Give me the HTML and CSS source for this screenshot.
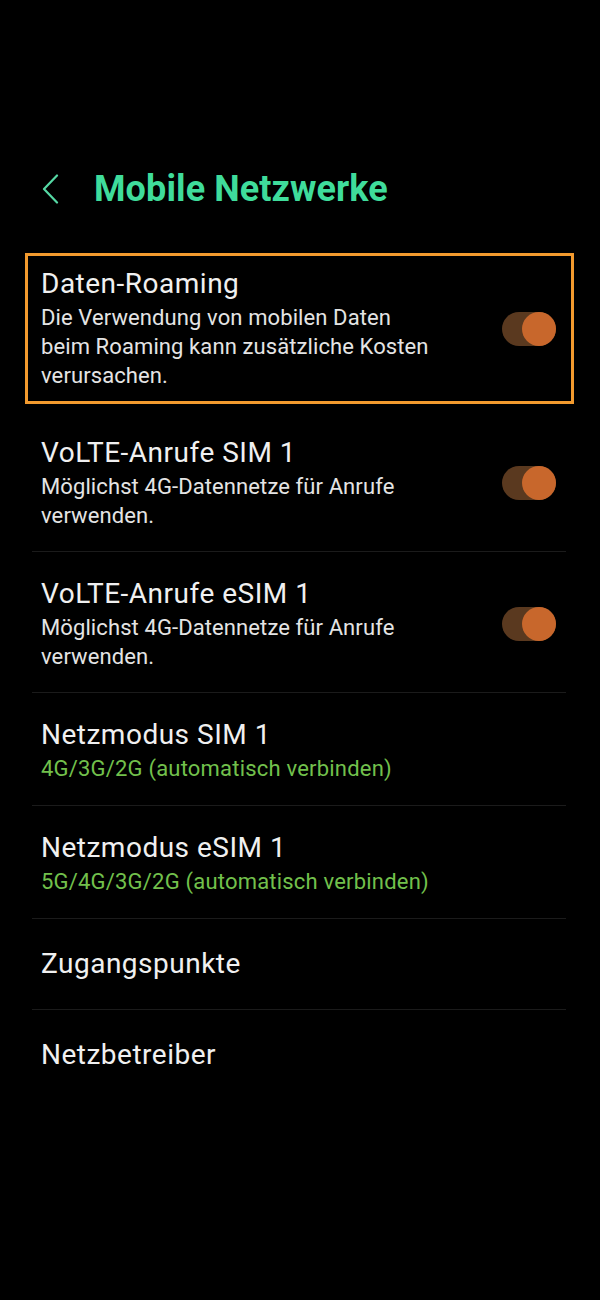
FILE: index.html
```html
<!DOCTYPE html>
<html lang="de">
<head>
<meta charset="utf-8">
<title>Mobile Netzwerke</title>
<link rel="stylesheet" href="styles.css">
</head>
<body>
<div class="page">
  <header class="header">
    <svg class="back" width="18" height="30" viewBox="0 0 18 30"><path d="M16 1.5 L3 15 L16 28.5" fill="none" stroke="#55d8a4" stroke-width="2.2" stroke-linecap="round" stroke-linejoin="round"/></svg>
    <h1 class="title">Mobile Netzwerke</h1>
  </header>
  <ul class="list">
    <li class="row highlighted">
      <div class="text">
        <div class="row-title">Daten-Roaming</div>
        <div class="row-sub">Die Verwendung von mobilen Daten<br>beim Roaming kann zusätzliche Kosten<br>verursachen.</div>
      </div>
      <span class="toggle"><span class="thumb"></span></span>
    </li>
    <li class="row">
      <div class="text">
        <div class="row-title">VoLTE-Anrufe SIM 1</div>
        <div class="row-sub">Möglichst 4G-Datennetze für Anrufe<br>verwenden.</div>
      </div>
      <span class="toggle"><span class="thumb"></span></span>
    </li>
    <li class="row divided">
      <div class="text">
        <div class="row-title">VoLTE-Anrufe eSIM 1</div>
        <div class="row-sub">Möglichst 4G-Datennetze für Anrufe<br>verwenden.</div>
      </div>
      <span class="toggle"><span class="thumb"></span></span>
    </li>
    <li class="row divided short">
      <div class="text">
        <div class="row-title">Netzmodus SIM 1</div>
        <div class="row-sub green">4G/3G/2G (automatisch verbinden)</div>
      </div>
    </li>
    <li class="row divided short">
      <div class="text">
        <div class="row-title">Netzmodus eSIM 1</div>
        <div class="row-sub green">5G/4G/3G/2G (automatisch verbinden)</div>
      </div>
    </li>
    <li class="row divided single">
      <div class="text">
        <div class="row-title">Zugangspunkte</div>
      </div>
    </li>
    <li class="row divided single">
      <div class="text">
        <div class="row-title">Netzbetreiber</div>
      </div>
    </li>
  </ul>
</div>
</body>
</html>
```

FILE: styles.css
```css
html, body {
  margin: 0;
  padding: 0;
  background: #000;
}
body {
  font-family: Roboto, "Noto Sans", "Liberation Sans", sans-serif;
  color: #f0f0f0;
  width: 600px;
  height: 1300px;
  overflow: hidden;
}
.page {
  padding: 160px 34px 0 32px;
}
.header {
  display: flex;
  align-items: center;
  height: 58px;
  padding-left: 9px;
}
.back {
  display: block;
  flex: none;
}
.title {
  margin: 0 0 0 35px;
  font-size: 36px;
  font-weight: 700;
  color: #3fdc9b;
  letter-spacing: 0.1px;
}
.list {
  list-style: none;
  margin: 24px 0 0 0;
  padding: 0;
}
.row {
  position: relative;
  display: flex;
  align-items: center;
  justify-content: space-between;
  padding: 25px 10px 21px 9px;
}
.row.short {
  padding-bottom: 22px;
}
.row.single {
  padding: 28px 10px 28px 9px;
}
.row.divided {
  border-top: 1px solid #1b1b1b;
}
.highlighted::after {
  content: "";
  position: absolute;
  top: 11px;
  bottom: 7px;
  left: -7px;
  right: -8px;
  border: 3px solid #f29a2e;
  pointer-events: none;
}
.row-title {
  font-size: 28px;
  line-height: 34px;
  letter-spacing: 0.5px;
  color: #f0f0f0;
}
.row-sub {
  margin-top: 2px;
  font-size: 22px;
  line-height: 29px;
  letter-spacing: 0.1px;
  color: #e4e4e4;
}
.row-sub.green {
  color: #72c04c;
  letter-spacing: 0.2px;
}
.toggle {
  position: relative;
  flex: none;
  width: 54px;
  height: 34px;
  border-radius: 17px;
  background: #5a391f;
}
.thumb {
  position: absolute;
  right: 0;
  top: 0;
  width: 34px;
  height: 34px;
  border-radius: 50%;
  background: #c8672c;
}
```
